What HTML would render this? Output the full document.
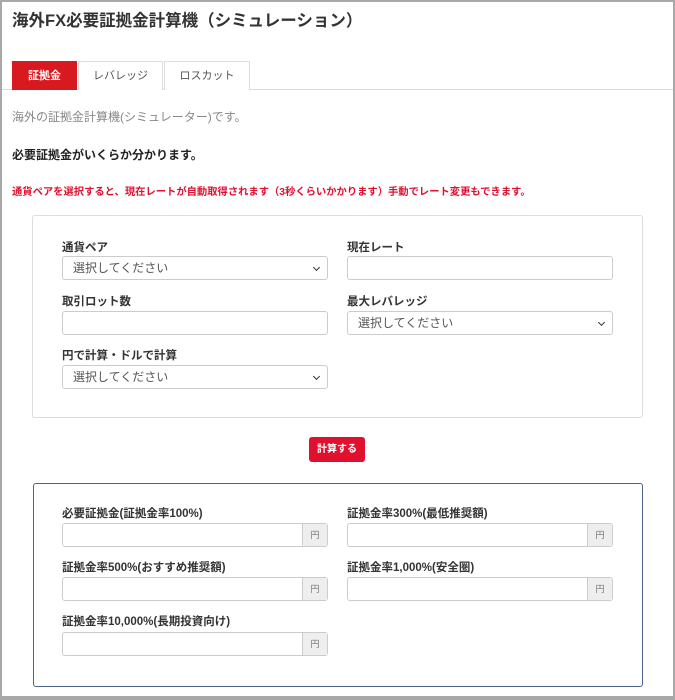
<!DOCTYPE html>
<html><head><meta charset="utf-8"><style>
*{box-sizing:border-box;margin:0;padding:0}
body{width:675px;height:700px;background:#fff;font-family:"Liberation Sans","Noto Sans CJK JP",sans-serif;position:relative;overflow:hidden;color:#333}
.frame{position:absolute;left:0;top:0;width:675px;height:700px;border:2px solid #a8a8a8;border-bottom:4px solid #a8a8a8;pointer-events:none}
.a{position:absolute;white-space:nowrap}
h1{position:absolute;left:12px;top:7px;font-size:16.5px;font-weight:bold;color:#333}
.tab{position:absolute;top:61px;height:29px;border:1px solid #ddd;border-bottom:none;font-size:11px;color:#555;text-align:center;line-height:28px;background:#fff}
.line{position:absolute;left:0;right:0;top:89px;border-top:1px solid #ddd}
.box{position:absolute;border:1px solid #ddd;border-radius:3px}
.lbl{position:absolute;font-size:11.5px;font-weight:bold;color:#333}
.in{position:absolute;height:24px;border:1px solid #ccc;border-radius:3px;background:#fff;font-size:12px;color:#555;padding-left:10px;line-height:22px}
.sel::after{content:"";position:absolute;right:8px;top:8px;width:4px;height:4px;border-right:1.5px solid #333;border-bottom:1.5px solid #333;transform:rotate(45deg)}
.add{position:absolute;right:0;top:0;bottom:0;width:25px;background:#eee;border-left:1px solid #ccc;font-size:9px;color:#777;text-align:center;line-height:22px}
</style></head><body>
<h1>海外FX必要証拠金計算機（シミュレーション）</h1>
<div class="line"></div>
<div class="tab" style="left:12px;width:65px;background:#d71920;color:#fff;font-weight:bold;border-color:#d71920">証拠金</div>
<div class="tab" style="left:78px;width:85px">レバレッジ</div>
<div class="tab" style="left:164px;width:86px">ロスカット</div>
<div class="a" style="left:12px;top:108px;font-size:12px;color:#888">海外の証拠金計算機(シミュレーター)です。</div>
<div class="a" style="left:12px;top:146px;font-size:12px;font-weight:bold;color:#222">必要証拠金がいくらか分かります。</div>
<div class="a" style="left:12px;top:183px;font-size:10.3px;font-weight:bold;color:#e0102f">通貨ペアを選択すると、現在レートが自動取得されます（3秒くらいかかります）手動でレート変更もできます。</div>
<div class="box" style="left:32px;top:215px;width:611px;height:203px"></div>
<div class="lbl" style="left:62px;top:239px">通貨ペア</div>
<div class="in sel" style="left:62px;top:256px;width:266px">選択してください</div>
<div class="lbl" style="left:347px;top:239px">現在レート</div>
<div class="in" style="left:347px;top:256px;width:266px"></div>
<div class="lbl" style="left:62px;top:293px">取引ロット数</div>
<div class="in" style="left:62px;top:311px;width:266px"></div>
<div class="lbl" style="left:347px;top:293px">最大レバレッジ</div>
<div class="in sel" style="left:347px;top:311px;width:266px">選択してください</div>
<div class="lbl" style="left:62px;top:347px">円で計算・ドルで計算</div>
<div class="in sel" style="left:62px;top:365px;width:266px">選択してください</div>
<div class="a" style="left:309px;top:437px;width:56px;height:25px;background:#e0102f;border-radius:3px;color:#fff;font-size:10px;font-weight:bold;text-align:center;line-height:25px">計算する</div>
<div class="box" style="left:33px;top:483px;width:610px;height:204px;border:1.5px solid #4a6389"></div>
<div class="lbl" style="left:62px;top:505px">必要証拠金(証拠金率100%)</div>
<div class="in" style="left:62px;top:523px;width:266px"><div class="add">円</div></div>
<div class="lbl" style="left:347px;top:505px">証拠金率300%(最低推奨額)</div>
<div class="in" style="left:347px;top:523px;width:266px"><div class="add">円</div></div>
<div class="lbl" style="left:62px;top:559px">証拠金率500%(おすすめ推奨額)</div>
<div class="in" style="left:62px;top:577px;width:266px"><div class="add">円</div></div>
<div class="lbl" style="left:347px;top:559px">証拠金率1,000%(安全圏)</div>
<div class="in" style="left:347px;top:577px;width:266px"><div class="add">円</div></div>
<div class="lbl" style="left:62px;top:613px">証拠金率10,000%(長期投資向け)</div>
<div class="in" style="left:62px;top:632px;width:266px"><div class="add">円</div></div>
<div class="frame"></div>
</body></html>
